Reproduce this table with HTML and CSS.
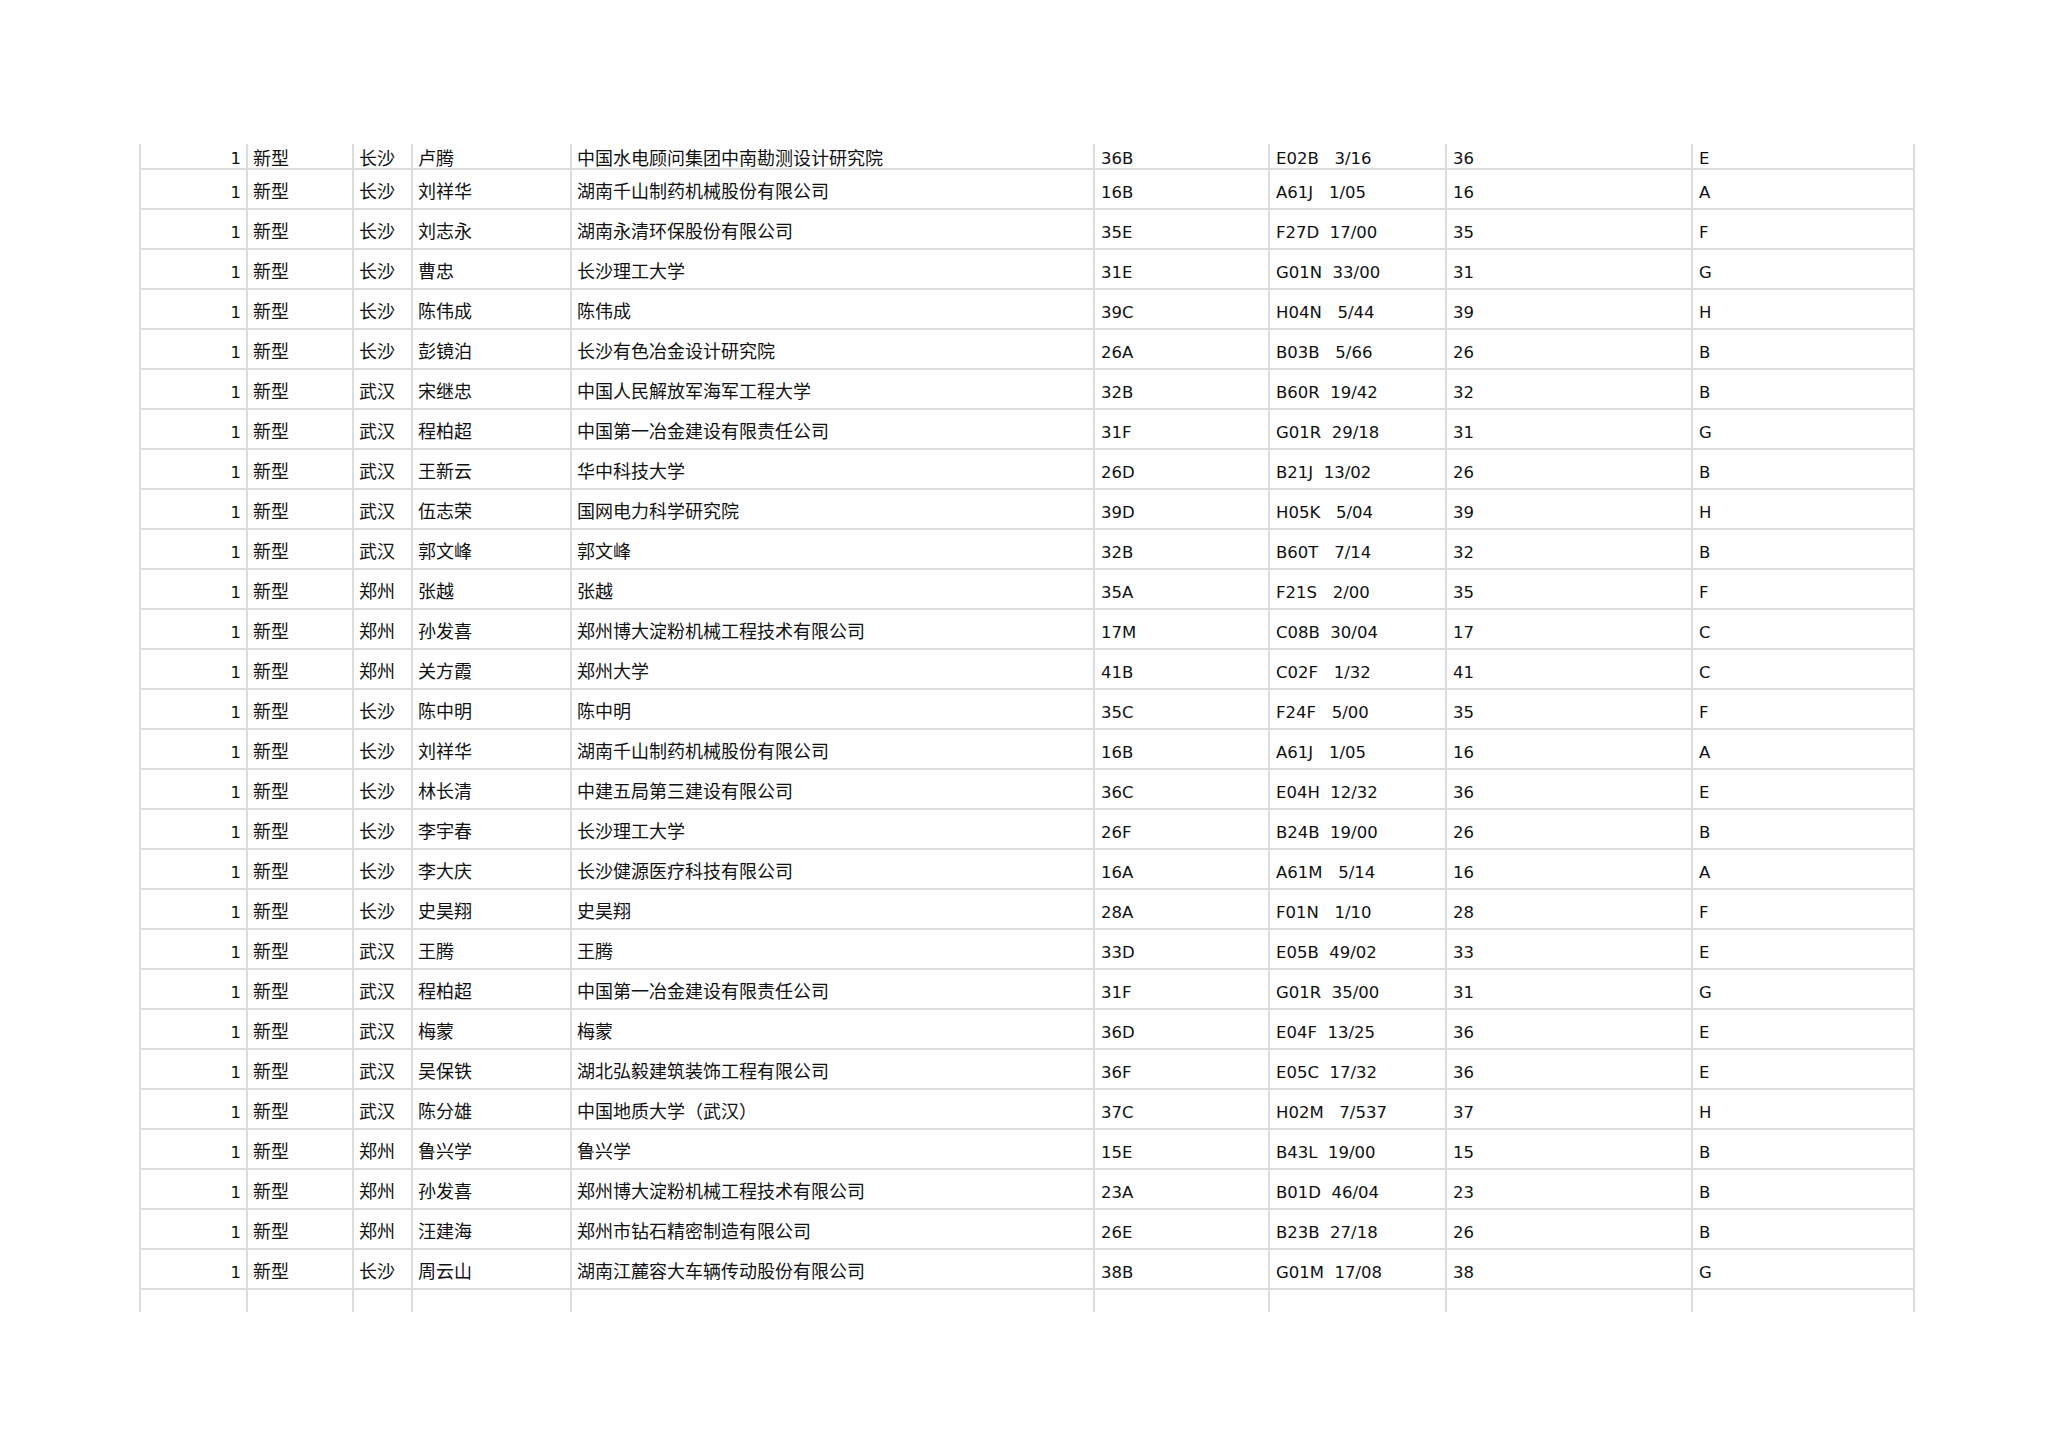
FILE: index.html
```html
<!DOCTYPE html>
<html lang="zh-CN">
<head>
<meta charset="utf-8">
<title>专利列表</title>
<link rel="stylesheet" href="styles.css">
</head>
<body>
<div class="page">
  <div class="sheet">
    <div class="row first"><div class="c n">1</div><div class="c zh">新型</div><div class="c zh">长沙</div><div class="c zh">卢腾</div><div class="c zh">中国水电顾问集团中南勘测设计研究院</div><div class="c">36B</div><div class="c ipc">E02B   3/16</div><div class="c">36</div><div class="c">E</div></div>
    <div class="row"><div class="c n">1</div><div class="c zh">新型</div><div class="c zh">长沙</div><div class="c zh">刘祥华</div><div class="c zh">湖南千山制药机械股份有限公司</div><div class="c">16B</div><div class="c ipc">A61J   1/05</div><div class="c">16</div><div class="c">A</div></div>
    <div class="row"><div class="c n">1</div><div class="c zh">新型</div><div class="c zh">长沙</div><div class="c zh">刘志永</div><div class="c zh">湖南永清环保股份有限公司</div><div class="c">35E</div><div class="c ipc">F27D  17/00</div><div class="c">35</div><div class="c">F</div></div>
    <div class="row"><div class="c n">1</div><div class="c zh">新型</div><div class="c zh">长沙</div><div class="c zh">曹忠</div><div class="c zh">长沙理工大学</div><div class="c">31E</div><div class="c ipc">G01N  33/00</div><div class="c">31</div><div class="c">G</div></div>
    <div class="row"><div class="c n">1</div><div class="c zh">新型</div><div class="c zh">长沙</div><div class="c zh">陈伟成</div><div class="c zh">陈伟成</div><div class="c">39C</div><div class="c ipc">H04N   5/44</div><div class="c">39</div><div class="c">H</div></div>
    <div class="row"><div class="c n">1</div><div class="c zh">新型</div><div class="c zh">长沙</div><div class="c zh">彭镜泊</div><div class="c zh">长沙有色冶金设计研究院</div><div class="c">26A</div><div class="c ipc">B03B   5/66</div><div class="c">26</div><div class="c">B</div></div>
    <div class="row"><div class="c n">1</div><div class="c zh">新型</div><div class="c zh">武汉</div><div class="c zh">宋继忠</div><div class="c zh">中国人民解放军海军工程大学</div><div class="c">32B</div><div class="c ipc">B60R  19/42</div><div class="c">32</div><div class="c">B</div></div>
    <div class="row"><div class="c n">1</div><div class="c zh">新型</div><div class="c zh">武汉</div><div class="c zh">程柏超</div><div class="c zh">中国第一冶金建设有限责任公司</div><div class="c">31F</div><div class="c ipc">G01R  29/18</div><div class="c">31</div><div class="c">G</div></div>
    <div class="row"><div class="c n">1</div><div class="c zh">新型</div><div class="c zh">武汉</div><div class="c zh">王新云</div><div class="c zh">华中科技大学</div><div class="c">26D</div><div class="c ipc">B21J  13/02</div><div class="c">26</div><div class="c">B</div></div>
    <div class="row"><div class="c n">1</div><div class="c zh">新型</div><div class="c zh">武汉</div><div class="c zh">伍志荣</div><div class="c zh">国网电力科学研究院</div><div class="c">39D</div><div class="c ipc">H05K   5/04</div><div class="c">39</div><div class="c">H</div></div>
    <div class="row"><div class="c n">1</div><div class="c zh">新型</div><div class="c zh">武汉</div><div class="c zh">郭文峰</div><div class="c zh">郭文峰</div><div class="c">32B</div><div class="c ipc">B60T   7/14</div><div class="c">32</div><div class="c">B</div></div>
    <div class="row"><div class="c n">1</div><div class="c zh">新型</div><div class="c zh">郑州</div><div class="c zh">张越</div><div class="c zh">张越</div><div class="c">35A</div><div class="c ipc">F21S   2/00</div><div class="c">35</div><div class="c">F</div></div>
    <div class="row"><div class="c n">1</div><div class="c zh">新型</div><div class="c zh">郑州</div><div class="c zh">孙发喜</div><div class="c zh">郑州博大淀粉机械工程技术有限公司</div><div class="c">17M</div><div class="c ipc">C08B  30/04</div><div class="c">17</div><div class="c">C</div></div>
    <div class="row"><div class="c n">1</div><div class="c zh">新型</div><div class="c zh">郑州</div><div class="c zh">关方霞</div><div class="c zh">郑州大学</div><div class="c">41B</div><div class="c ipc">C02F   1/32</div><div class="c">41</div><div class="c">C</div></div>
    <div class="row"><div class="c n">1</div><div class="c zh">新型</div><div class="c zh">长沙</div><div class="c zh">陈中明</div><div class="c zh">陈中明</div><div class="c">35C</div><div class="c ipc">F24F   5/00</div><div class="c">35</div><div class="c">F</div></div>
    <div class="row"><div class="c n">1</div><div class="c zh">新型</div><div class="c zh">长沙</div><div class="c zh">刘祥华</div><div class="c zh">湖南千山制药机械股份有限公司</div><div class="c">16B</div><div class="c ipc">A61J   1/05</div><div class="c">16</div><div class="c">A</div></div>
    <div class="row"><div class="c n">1</div><div class="c zh">新型</div><div class="c zh">长沙</div><div class="c zh">林长清</div><div class="c zh">中建五局第三建设有限公司</div><div class="c">36C</div><div class="c ipc">E04H  12/32</div><div class="c">36</div><div class="c">E</div></div>
    <div class="row"><div class="c n">1</div><div class="c zh">新型</div><div class="c zh">长沙</div><div class="c zh">李宇春</div><div class="c zh">长沙理工大学</div><div class="c">26F</div><div class="c ipc">B24B  19/00</div><div class="c">26</div><div class="c">B</div></div>
    <div class="row"><div class="c n">1</div><div class="c zh">新型</div><div class="c zh">长沙</div><div class="c zh">李大庆</div><div class="c zh">长沙健源医疗科技有限公司</div><div class="c">16A</div><div class="c ipc">A61M   5/14</div><div class="c">16</div><div class="c">A</div></div>
    <div class="row"><div class="c n">1</div><div class="c zh">新型</div><div class="c zh">长沙</div><div class="c zh">史昊翔</div><div class="c zh">史昊翔</div><div class="c">28A</div><div class="c ipc">F01N   1/10</div><div class="c">28</div><div class="c">F</div></div>
    <div class="row"><div class="c n">1</div><div class="c zh">新型</div><div class="c zh">武汉</div><div class="c zh">王腾</div><div class="c zh">王腾</div><div class="c">33D</div><div class="c ipc">E05B  49/02</div><div class="c">33</div><div class="c">E</div></div>
    <div class="row"><div class="c n">1</div><div class="c zh">新型</div><div class="c zh">武汉</div><div class="c zh">程柏超</div><div class="c zh">中国第一冶金建设有限责任公司</div><div class="c">31F</div><div class="c ipc">G01R  35/00</div><div class="c">31</div><div class="c">G</div></div>
    <div class="row"><div class="c n">1</div><div class="c zh">新型</div><div class="c zh">武汉</div><div class="c zh">梅蒙</div><div class="c zh">梅蒙</div><div class="c">36D</div><div class="c ipc">E04F  13/25</div><div class="c">36</div><div class="c">E</div></div>
    <div class="row"><div class="c n">1</div><div class="c zh">新型</div><div class="c zh">武汉</div><div class="c zh">吴保铁</div><div class="c zh">湖北弘毅建筑装饰工程有限公司</div><div class="c">36F</div><div class="c ipc">E05C  17/32</div><div class="c">36</div><div class="c">E</div></div>
    <div class="row"><div class="c n">1</div><div class="c zh">新型</div><div class="c zh">武汉</div><div class="c zh">陈分雄</div><div class="c zh">中国地质大学（武汉）</div><div class="c">37C</div><div class="c ipc">H02M   7/537</div><div class="c">37</div><div class="c">H</div></div>
    <div class="row"><div class="c n">1</div><div class="c zh">新型</div><div class="c zh">郑州</div><div class="c zh">鲁兴学</div><div class="c zh">鲁兴学</div><div class="c">15E</div><div class="c ipc">B43L  19/00</div><div class="c">15</div><div class="c">B</div></div>
    <div class="row"><div class="c n">1</div><div class="c zh">新型</div><div class="c zh">郑州</div><div class="c zh">孙发喜</div><div class="c zh">郑州博大淀粉机械工程技术有限公司</div><div class="c">23A</div><div class="c ipc">B01D  46/04</div><div class="c">23</div><div class="c">B</div></div>
    <div class="row"><div class="c n">1</div><div class="c zh">新型</div><div class="c zh">郑州</div><div class="c zh">汪建海</div><div class="c zh">郑州市钻石精密制造有限公司</div><div class="c">26E</div><div class="c ipc">B23B  27/18</div><div class="c">26</div><div class="c">B</div></div>
    <div class="row"><div class="c n">1</div><div class="c zh">新型</div><div class="c zh">长沙</div><div class="c zh">周云山</div><div class="c zh">湖南江麓容大车辆传动股份有限公司</div><div class="c">38B</div><div class="c ipc">G01M  17/08</div><div class="c">38</div><div class="c">G</div></div>
    <div class="row last"><div class="c"></div><div class="c"></div><div class="c"></div><div class="c"></div><div class="c"></div><div class="c"></div><div class="c"></div><div class="c"></div><div class="c"></div></div>
  </div>
</div>
</body>
</html>
```

FILE: styles.css
```css
html, body {
  margin: 0;
  padding: 0;
  background: #ffffff;
}

.page {
  padding: 144px 0 0 139px;
  color: #111111;
  font-family: "DejaVu Sans", "Noto Sans CJK SC", sans-serif;
  font-size: 16.5px;
}

.sheet {
  width: 1776px;
}

.row {
  display: grid;
  grid-template-columns: 107px 106px 59px 159px 523px 175px 177px 246px 224px;
  height: 40px;
  box-sizing: border-box;
}

.row.first {
  height: 26px;
}

.row.last {
  height: 22px;
}

.c {
  display: flex;
  align-items: center;
  box-sizing: border-box;
  border-left: 2px solid #dcdcdc;
  border-bottom: 2px solid #dcdcdc;
  padding: 7px 4px 0 6px;
  line-height: 22px;
  white-space: nowrap;
  overflow: hidden;
}

.c:last-child {
  border-right: 2px solid #dcdcdc;
}

.row.first .c {
  padding-top: 5px;
}

.row.first .c.zh {
  padding-top: 1px;
}

.row.last .c {
  border-bottom: none;
}

.c.n {
  justify-content: flex-end;
  padding-left: 0;
  padding-right: 5px;
}

.c.zh {
  font-family: "Noto Sans CJK SC", "DejaVu Sans", sans-serif;
  font-size: 18px;
  font-weight: 400;
  padding-top: 2px;
  padding-left: 5px;
}

.c.ipc {
  white-space: pre;
}
```
